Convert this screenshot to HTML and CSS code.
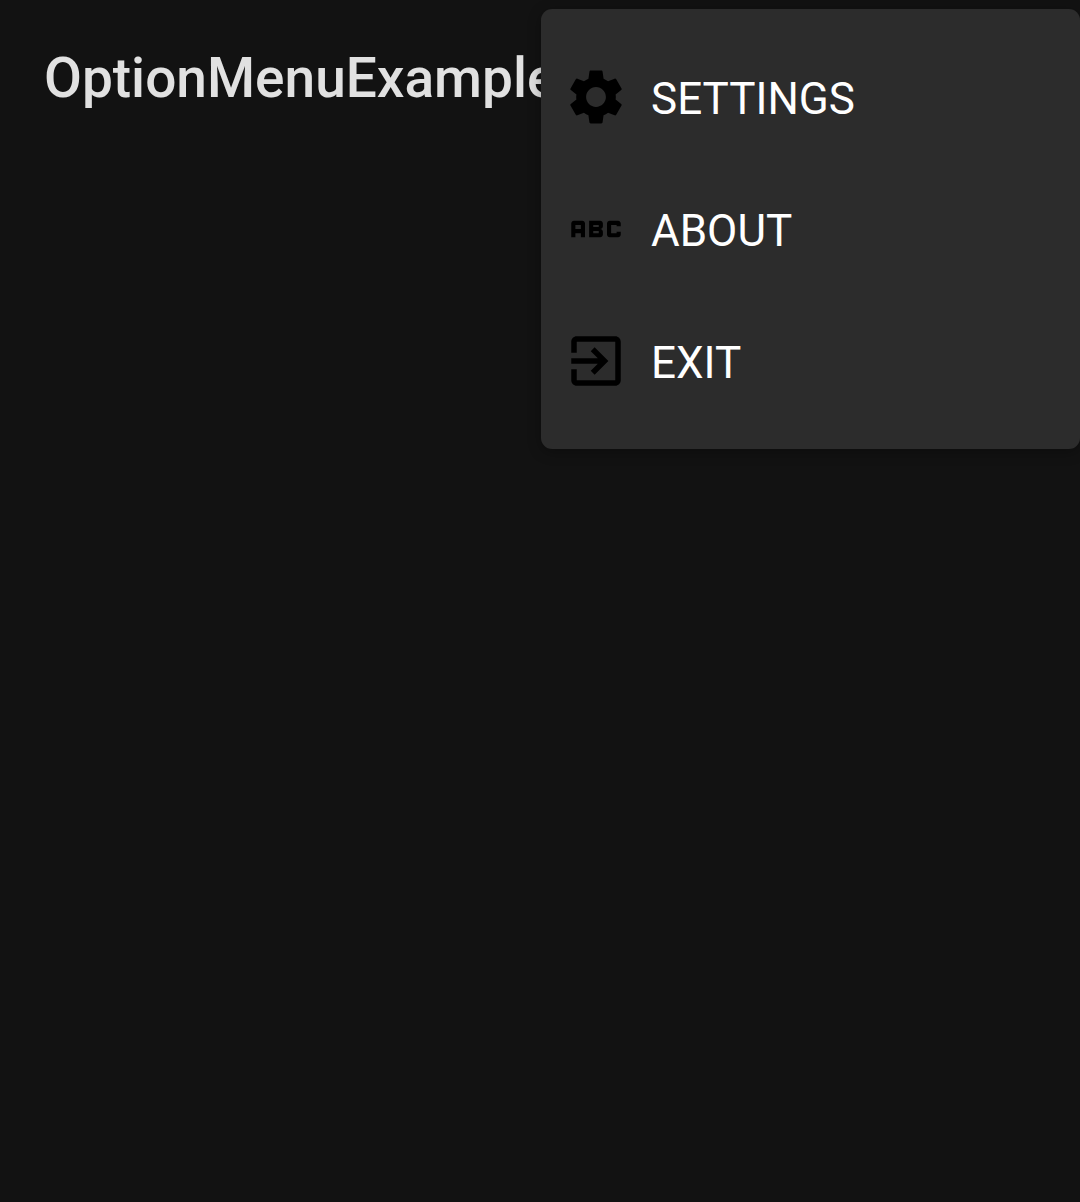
FILE: index.html
```html
<!DOCTYPE html>
<html lang="en">
<head>
<meta charset="utf-8">
<meta name="viewport" content="width=device-width, initial-scale=1">
<title>OptionMenuExample</title>
<link rel="stylesheet" href="styles.css">
</head>
<body>
<header class="app-bar">
  <h1 class="app-title">OptionMenuExample</h1>
</header>
<div class="menu" role="menu">
  <button class="menu-item" type="button" role="menuitem">
    <svg class="icon" viewBox="0 0 24 24" aria-hidden="true"><path d="M19.14 12.94c.04-.3.06-.61.06-.94 0-.32-.02-.64-.07-.94l2.03-1.58c.18-.14.23-.41.12-.61l-1.92-3.32c-.12-.22-.37-.29-.59-.22l-2.39.96c-.5-.38-1.03-.7-1.62-.94l-.36-2.54c-.04-.24-.24-.41-.48-.41h-3.84c-.24 0-.43.17-.47.41l-.36 2.54c-.59.24-1.13.57-1.62.94l-2.39-.96c-.22-.08-.47 0-.59.22L2.74 8.87c-.12.21-.08.47.12.61l2.03 1.58c-.05.3-.09.63-.09.94s.02.64.07.94l-2.03 1.58c-.18.14-.23.41-.12.61l1.92 3.32c.12.22.37.29.59.22l2.39-.96c.5.38 1.03.7 1.62.94l.36 2.54c.05.24.24.41.48.41h3.84c.24 0 .44-.17.47-.41l.36-2.54c.59-.24 1.13-.56 1.62-.94l2.39.96c.22.08.47 0 .59-.22l1.92-3.32c.12-.22.07-.47-.12-.61l-2.01-1.58zM12 15.6c-1.98 0-3.6-1.62-3.6-3.6s1.62-3.6 3.6-3.6 3.6 1.62 3.6 3.6-1.62 3.6-3.6 3.6z"/></svg>
    <span class="menu-label">SETTINGS</span>
  </button>
  <button class="menu-item" type="button" role="menuitem">
    <svg class="icon" viewBox="0 0 24 24" aria-hidden="true"><path d="M21 11h-1.5v-.5h-2v3h2V13H21v1c0 .55-.45 1-1 1h-3c-.55 0-1-.45-1-1v-4c0-.55.45-1 1-1h3c.55 0 1 .45 1 1v1zM8 10v5H6.500v-1.500h-2V15H3v-5c0-.55.45-1 1-1h3c.55 0 1 .45 1 1zm-1.500.5h-2V12h2v-1.500zm7 1.500c.55 0 1 .45 1 1v1c0 .55-.45 1-1 1h-4V9h4c.55 0 1 .45 1 1v1c0 .55-.45 1-1 1zM11 10.500v.75h2v-.75h-2zm2 2.250h-2v.75h2v-.75z"/></svg>
    <span class="menu-label">ABOUT</span>
  </button>
  <button class="menu-item" type="button" role="menuitem">
    <svg class="icon" viewBox="0 0 24 24" aria-hidden="true"><path d="M10.090 15.590L11.500 17l5-5-5-5-1.410 1.410L12.670 11H3v2h9.670l-2.580 2.590zM19 3H5c-1.110 0-2 .9-2 2v4h2V5h14v14H5v-4H3v4c0 1.100.89 2 2 2h14c1.100 0 2-.9 2-2V5c0-1.100-.9-2-2-2z"/></svg>
    <span class="menu-label">EXIT</span>
  </button>
</div>
</body>
</html>
```
FILE: styles.css
```css
* {
  box-sizing: border-box;
}

body {
  margin: 0;
  min-height: 100vh;
  background: #121212;
  font-family: Roboto, sans-serif;
}

.app-bar {
  display: flex;
  align-items: center;
  padding: 46px 44px;
}

.app-title {
  margin: 0;
  color: #e1e1e1;
  font-size: 55px;
  font-weight: 500;
  line-height: 64px;
}

.menu {
  position: absolute;
  top: 9px;
  right: 0;
  width: 539px;
  max-width: 100%;
  padding: 22px 0;
  border-radius: 11px;
  background: #2c2c2c;
  box-shadow: 0 3px 14px rgba(0, 0, 0, 0.3);
}

.menu-item {
  display: flex;
  align-items: center;
  gap: 22px;
  width: 100%;
  height: 132px;
  padding: 0 22px;
  border: 0;
  background: none;
  color: #fff;
  font: 400 44px/52px Roboto, sans-serif;
  text-align: left;
}

.menu-label {
  padding-top: 4px;
}

.icon {
  flex: none;
  width: 66px;
  height: 66px;
  fill: #000;
}
```
